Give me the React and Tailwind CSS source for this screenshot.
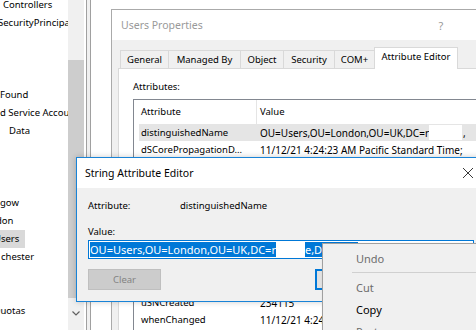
const treeRows = [
  { text: "Controllers", cls: "ml-[3px]" },
  { text: "SecurityPrincipals", cls: "ml-[-2px]" },
  null,
  null,
  null,
  { text: "Found", cls: "ml-0" },
  { text: "d Service Accounts", cls: "ml-0" },
  { text: "Data", cls: "ml-[9px]" },
  null,
  null,
  null,
  { text: "gow", cls: "ml-0" },
  { text: "don", cls: "ml-[-4px]" },
  { text: "Users", cls: "ml-[-6px]", selected: true },
  { text: "chester", cls: "ml-[1px]" },
  null,
  null,
  { text: "Quotas", cls: "ml-[-7px]" },
  null,
];

const tabs = [
  { label: "General", w: "w-[48px]" },
  { label: "Managed By", w: "w-[72px]" },
  { label: "Object", w: "w-[43px]" },
  { label: "Security", w: "w-[51px]" },
  { label: "COM+", w: "w-[40px]" },
];

const attributes = [
  ["distinguishedName", "OU=Users,OU=London,OU=UK,DC=r"],
  ["dSCorePropagationD...", "11/12/21 4:24:23 AM Pacific Standard Time;"],
  ["gPLink", "[LDAP://cn={31B2F340-016D-11D2-945F-00C04FB984F9}"],
  ["instanceType", "0x4 = ( WRITE )"],
  ["name", "Users"],
  ["objectCategory", "CN=Organizational-Unit,CN=Schema,CN=Configuration"],
  ["objectClass", "top; organizationalUnit"],
  ["objectGUID", "5c1a7e0d-93b4-4f7a-8a0e-2b6f1c9d4e21"],
  ["ou", "Users"],
  ["uSNChanged", "234120"],
  ["uSNCreated", "234115"],
  ["whenChanged", "11/12/21 4:24:23 AM Pacific Standard Time"],
  ["whenCreated", "11/12/21 4:20:02 AM Pacific Standard Time"],
];

function Tree() {
  return (
    <div className="w-[68px] h-full bg-white overflow-hidden text-[9.5px] text-black">
      <div className="mt-[-4px] flex flex-col">
        {treeRows.map((row, i) => (
          <div key={i} className="h-[18px] flex items-center whitespace-nowrap">
            {row && row.selected ? (
              <div className="w-[25px] h-full bg-[#d9d9d9] overflow-hidden flex items-center">
                <span className={row.cls}>{row.text}</span>
              </div>
            ) : row ? (
              <span className={row.cls}>{row.text}</span>
            ) : null}
          </div>
        ))}
      </div>
    </div>
  );
}

function Scrollbar() {
  return (
    <div className="w-[16px] h-full flex flex-col bg-[#f0f0f0]">
      <div className="h-[60px]" />
      <div className="h-[238px] bg-[#cdcdcd]" />
      <div className="flex-1 flex items-center justify-center pb-[2px]">
        <svg width="8" height="5" viewBox="0 0 8 5">
          <path d="M0.5 0.5 L4 4 L7.5 0.5" fill="none" stroke="#606060" strokeWidth="1.2" />
        </svg>
      </div>
    </div>
  );
}

function UsersProperties() {
  return (
    <div className="absolute left-[111px] top-[9px] w-[400px] h-[340px] border border-[#aaaaaa] bg-[#f0f0f0] flex flex-col">
      <div className="h-[30px] bg-white flex items-center">
        <span className="pl-[9px] text-[10.5px] text-[#999999]">Users Properties</span>
        <div className="flex-1" />
        <div className="w-[46px] text-center text-[11px] text-[#999999]">?</div>
        <div className="w-[46px]" />
      </div>
      <div className="flex-1 flex flex-col pl-[6px] pt-[7px]">
        <div className="h-[21px] flex items-end pl-[2px] text-[9.5px] text-black">
          {tabs.map((t) => (
            <div
              key={t.label}
              className={
                "h-[18px] flex items-center justify-center border-t border-l border-[#d9d9d9] bg-[#f0f0f0] " +
                t.w
              }
            >
              {t.label}
            </div>
          ))}
          <div className="relative z-10 w-[84px] h-[22px] mb-[-1px] flex items-start justify-center pt-[4px] border border-b-0 border-[#d9d9d9] bg-white">
            Attribute Editor
          </div>
        </div>
        <div className="flex-1 border border-[#d9d9d9] bg-white pl-[14px] pt-[12px] text-[9.5px] text-black">
          <div className="h-[12px] leading-[12px]">Attributes:</div>
          <div className="mt-[6px] border border-[#828790] bg-white">
            <div className="h-[24px] flex items-center">
              <div className="w-[122px] pl-[7px]">Attribute</div>
              <div className="w-px h-full bg-[#e5e5e5]" />
              <div className="pl-[3px]">Value</div>
            </div>
            {attributes.map(([name, value], i) => (
              <div
                key={name}
                className={
                  "h-[17px] ml-[5px] flex items-center whitespace-nowrap " +
                  (i === 0 ? "bg-[#e5e5e5]" : "")
                }
              >
                <div className="w-[117px] pl-[2px]">{name}</div>
                <div className="pl-[4px] flex items-center text-[10px]">
                  {value}
                  {i === 0 && <span className="inline-block w-[33px] h-[15px] bg-white" />}
                  {i === 0 && <span className="pl-[1px]">,</span>}
                </div>
              </div>
            ))}
          </div>
        </div>
      </div>
    </div>
  );
}

function StringEditor() {
  return (
    <div className="absolute z-20 left-[76px] top-[157px] w-[416px] h-[145px] border border-[#1883d7] bg-[#f0f0f0] flex flex-col shadow-[0_0_6px_rgba(0,0,0,0.2)]">
      <div className="h-[30px] bg-white flex items-center">
        <span className="pl-[8px] text-[10.5px] text-black">String Attribute Editor</span>
        <div className="flex-1" />
        <div className="w-[46px] flex items-center justify-center">
          <svg width="10" height="10" viewBox="0 0 10 10">
            <path d="M0 0 L10 10 M10 0 L0 10" stroke="#222" strokeWidth="0.9" />
          </svg>
        </div>
      </div>
      <div className="flex-1 pl-[11px] pt-[12px] text-[9.5px] text-black">
        <div className="h-[12px] flex items-center">
          <div className="w-[92px]">Attribute:</div>
          <div>distinguishedName</div>
        </div>
        <div className="mt-[14px] h-[12px] flex items-center">Value:</div>
        <div className="mt-[2px] w-[386px] h-[19px] border border-[#0078d7] bg-white flex items-center pl-[1px] text-[11px] whitespace-nowrap overflow-hidden">
          <span className="h-[15px] flex items-center bg-[#0078d7] text-white">
            OU=Users,OU=London,OU=UK,DC=r
            <span className="inline-block w-[29px] h-[15px] bg-white" />
            e,DC=com
          </span>
        </div>
        <div className="mt-[10px] flex">
          <div className="w-[73px] h-[21px] border border-[#bfbfbf] bg-[#cccccc] flex items-center justify-center text-[#838383]">
            Clear
          </div>
          <div className="ml-[154px] w-[73px] h-[21px] border-2 border-[#0078d7] bg-[#e1e1e1] flex items-center justify-center">
            OK
          </div>
          <div className="ml-[8px] w-[73px] h-[21px] border border-[#adadad] bg-[#e1e1e1] flex items-center justify-center">
            Cancel
          </div>
        </div>
      </div>
    </div>
  );
}

function ContextMenu() {
  const item = "h-[22px] flex items-center pl-[33px]";
  return (
    <div className="absolute z-30 left-[322px] top-[243px] w-[180px] h-[120px] border border-[#a0a0a0] bg-[#f0f0f0] pt-[3px] text-[11px] shadow-[2px_2px_3px_rgba(0,0,0,0.3)]">
      <div className={item + " text-[#6d6d6d]"}>Undo</div>
      <div className="h-[7px] flex items-center pl-[29px] pr-[2px]">
        <div className="h-px w-full bg-[#d0d0d0]" />
      </div>
      <div className={item + " text-[#6d6d6d]"}>Cut</div>
      <div className={item + " text-black"}>Copy</div>
      <div className={item + " text-[#6d6d6d]"}>Paste</div>
    </div>
  );
}

export default function App() {
  return (
    <div className="relative w-[476px] h-[330px] overflow-hidden bg-white font-['Noto_Sans',sans-serif] leading-none">
      <div className="flex h-full">
        <Tree />
        <Scrollbar />
        <div className="w-[2px] bg-white" />
        <div className="w-px bg-[#a0a0a0]" />
        <div className="w-[3px] bg-[#f0f0f0]" />
        <div className="w-px bg-[#a0a0a0]" />
        <div className="flex-1 bg-white" />
      </div>
      <UsersProperties />
      <StringEditor />
      <ContextMenu />
    </div>
  );
}
